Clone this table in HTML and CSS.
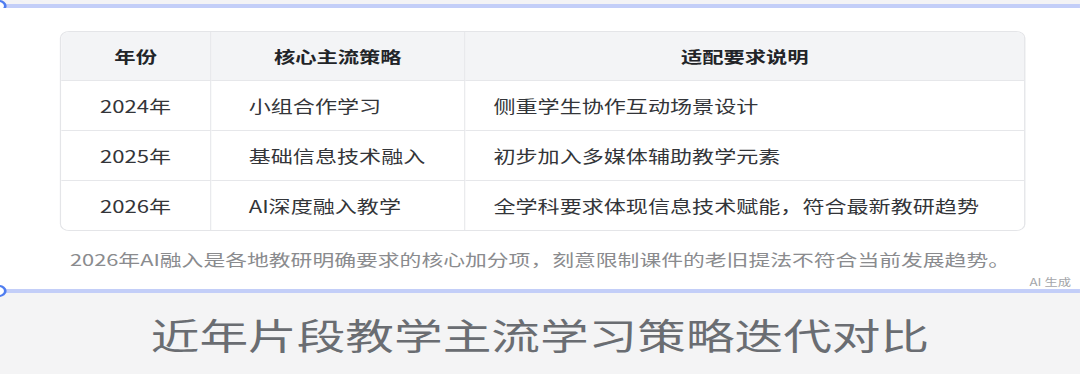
FILE: index.html
```html
<!DOCTYPE html>
<html lang="zh-CN">
<head>
<meta charset="utf-8">
<title>近年片段教学主流学习策略迭代对比</title>
<link rel="stylesheet" href="styles.css">
</head>
<body>
<div class="page">
  <div class="top-strip"></div>
  <div class="rule"><span class="handle"></span></div>
  <section class="card">
    <table class="grid">
      <thead>
        <tr>
          <th class="c1">年份</th>
          <th class="c2">核心主流策略</th>
          <th class="c3">适配要求说明</th>
        </tr>
      </thead>
      <tbody>
        <tr>
          <td class="c1">2024年</td>
          <td class="c2">小组合作学习</td>
          <td class="c3">侧重学生协作互动场景设计</td>
        </tr>
        <tr>
          <td class="c1">2025年</td>
          <td class="c2">基础信息技术融入</td>
          <td class="c3">初步加入多媒体辅助教学元素</td>
        </tr>
        <tr>
          <td class="c1">2026年</td>
          <td class="c2">AI深度融入教学</td>
          <td class="c3">全学科要求体现信息技术赋能，符合最新教研趋势</td>
        </tr>
      </tbody>
    </table>
    <p class="note">2026年AI融入是各地教研明确要求的核心加分项，刻意限制课件的老旧提法不符合当前发展趋势。</p>
    <div class="ai-tag">AI 生成</div>
  </section>
  <div class="rule"><span class="handle"></span></div>
  <footer class="caption">近年片段教学主流学习策略迭代对比</footer>
</div>
</body>
</html>
```

FILE: styles.css
```css
html, body {
  margin: 0;
  padding: 0;
  background: #f4f4f5;
  overflow: hidden;
}

body {
  width: 1080px;
  height: 374px;
  font-family: "Noto Sans CJK SC", "Noto Sans", sans-serif;
}

.page {
  width: 812px;
  transform: scaleX(1.33);
  transform-origin: 0 0;
  display: flex;
  flex-direction: column;
}

.top-strip {
  height: 4px;
  background: #f3f3f5;
}

.rule {
  position: relative;
  height: 4px;
  background: #c3cef8;
}

.handle {
  position: absolute;
  left: -7px;
  top: -4px;
  width: 8px;
  height: 8px;
  border: 2px solid #4f7df0;
  border-radius: 50%;
  background: #ffffff;
}

.card {
  background: #ffffff;
  height: 281px;
  padding: 23px 41px 0 45px;
  box-sizing: border-box;
  position: relative;
  overflow: hidden;
}

.grid {
  width: 726px;
  border-collapse: separate;
  border-spacing: 0;
  border: 1px solid #e4e5e8;
  border-radius: 7px;
  overflow: hidden;
  table-layout: fixed;
}

.grid th,
.grid td {
  border-right: 1px solid #e6e7ea;
  border-bottom: 1px solid #e6e7ea;
  font-size: 16.6px;
  line-height: 22px;
  padding: 0;
  vertical-align: middle;
  white-space: nowrap;
}

.grid th:last-child,
.grid td:last-child {
  border-right: none;
}

.grid tbody tr:last-child td {
  border-bottom: none;
}

.grid th {
  height: 48px;
  background: #f3f4f6;
  color: #222428;
  font-weight: 700;
  font-size: 16px;
  text-align: center;
}

.grid td {
  height: 49px;
  color: #333539;
  background: #ffffff;
}

.grid .c1 {
  width: 112px;
}

.grid .c2 {
  width: 190px;
}

.grid td.c1 {
  text-align: center;
}

.grid td.c2 {
  padding-left: 28px;
}

.grid td.c3 {
  padding-left: 21px;
}

.note {
  margin: 16px 0 0 -45px;
  width: 812px;
  text-align: center;
  font-size: 16.4px;
  line-height: 24px;
  color: #8a8b8e;
  white-space: nowrap;
}

.ai-tag {
  position: absolute;
  left: 774px;
  top: 267px;
  font-size: 10px;
  line-height: 14px;
  color: #a4a6aa;
  white-space: nowrap;
}

.caption {
  height: 82px;
  display: flex;
  align-items: center;
  justify-content: center;
  font-size: 36.6px;
  color: #6a6d72;
  background: #f4f4f5;
}
```
